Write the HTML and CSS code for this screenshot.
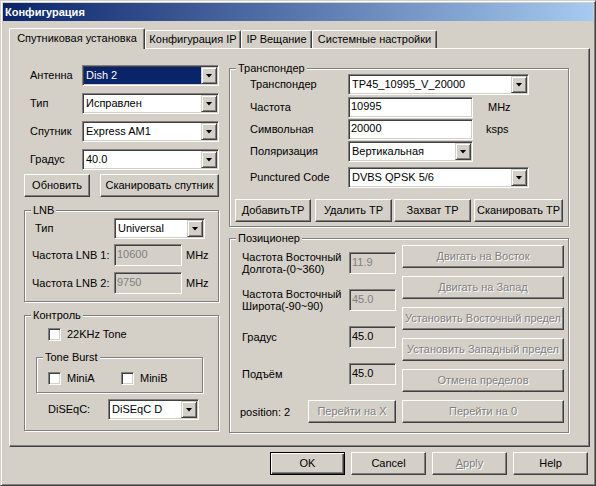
FILE: index.html
```html
<!DOCTYPE html>
<html lang="ru">
<head>
  <meta charset="UTF-8" />
  <title>Конфигурация</title>
  <link rel="stylesheet" href="styles.css">
</head>
<body>
  <div class="window">
    <div class="titlebar">Конфигурация</div>

    <div class="tabs">
      <div class="tab active tab-sat">Спутниковая установка</div>
      <div class="tab tab-ip">Конфигурация IP</div>
      <div class="tab tab-cast">IP Вещание</div>
      <div class="tab tab-sys">Системные настройки</div>
    </div>

    <div class="panel">
      <div class="col-left">
        <div class="row main-row">
          <span class="lbl">Антенна</span>
          <div class="combo main-combo"><span class="val sel">Dish 2</span><span class="drop"></span></div>
        </div>
        <div class="row main-row">
          <span class="lbl">Тип</span>
          <div class="combo main-combo"><span class="val">Исправлен</span><span class="drop"></span></div>
        </div>
        <div class="row main-row">
          <span class="lbl">Спутник</span>
          <div class="combo main-combo"><span class="val">Express AM1</span><span class="drop"></span></div>
        </div>
        <div class="row main-row">
          <span class="lbl">Градус</span>
          <div class="combo main-combo"><span class="val">40.0</span><span class="drop"></span></div>
        </div>
        <div class="row btn-row">
          <button class="btn btn-update">Обновить</button>
          <button class="btn btn-scan">Сканировать спутник</button>
        </div>

        <div class="group lnb">
          <div class="group-title">LNB</div>
          <div class="row lnb-type">
            <span class="lbl">Тип</span>
            <div class="combo lnb-combo"><span class="val">Universal</span><span class="drop"></span></div>
          </div>
          <div class="row lnb-freq">
            <span class="lbl">Частота LNB 1:</span>
            <div class="edit disabled">10600</div>
            <span class="unit">MHz</span>
          </div>
          <div class="row lnb-freq">
            <span class="lbl">Частота LNB 2:</span>
            <div class="edit disabled">9750</div>
            <span class="unit">MHz</span>
          </div>
        </div>

        <div class="group control">
          <div class="group-title">Контроль</div>
          <div class="row tone22"><span class="check"></span><span>22KHz Tone</span></div>
          <div class="group tone-burst">
            <div class="group-title">Tone Burst</div>
            <div class="row burst-row">
              <span class="burst-item"><span class="check"></span>MiniA</span>
              <span class="burst-item"><span class="check"></span>MiniB</span>
            </div>
          </div>
          <div class="row diseqc">
            <span class="lbl">DiSEqC:</span>
            <div class="combo"><span class="val">DiSEqC D</span><span class="drop"></span></div>
          </div>
        </div>
      </div>

      <div class="col-right">
        <div class="group transponder">
          <div class="group-title">Транспондер</div>
          <div class="row tp-row tp-first">
            <span class="lbl">Транспондер</span>
            <div class="combo tp-wide"><span class="val">TP45_10995_V_20000</span><span class="drop"></span></div>
          </div>
          <div class="row tp-row tp-freq">
            <span class="lbl">Частота</span>
            <div class="edit tp-narrow">10995</div>
            <span class="unit mhz">MHz</span>
          </div>
          <div class="row tp-row">
            <span class="lbl">Символьная</span>
            <div class="edit tp-narrow">20000</div>
            <span class="unit ksps">ksps</span>
          </div>
          <div class="row tp-row">
            <span class="lbl">Поляризация</span>
            <div class="combo tp-narrow"><span class="val">Вертикальная</span><span class="drop"></span></div>
          </div>
          <div class="row tp-row tp-code">
            <span class="lbl">Punctured Code</span>
            <div class="combo tp-wide"><span class="val">DVBS QPSK 5/6</span><span class="drop"></span></div>
          </div>
          <div class="row tp-buttons">
            <button class="btn tp-add">ДобавитьTP</button>
            <button class="btn tp-del">Удалить TP</button>
            <button class="btn tp-grab">Захват TP</button>
            <button class="btn tp-scan">Сканировать TP</button>
          </div>
        </div>

        <div class="group positioner">
          <div class="group-title">Позиционер</div>
          <div class="pos-body">
            <div class="pos-fields">
              <div class="row pos-row pos-two pos-first">
                <span class="lbl">Частота Восточный<br>Долгота-(0~360)</span>
                <div class="edit disabled">11.9</div>
              </div>
              <div class="row pos-row pos-two">
                <span class="lbl">Частота Восточный<br>Широта(-90~90)</span>
                <div class="edit disabled">45.0</div>
              </div>
              <div class="row pos-row">
                <span class="lbl">Градус</span>
                <div class="edit readonly">45.0</div>
              </div>
              <div class="row pos-row">
                <span class="lbl">Подъём</span>
                <div class="edit readonly">45.0</div>
              </div>
              <div class="row pos-row pos-last">
                <span class="lbl">position: 2</span>
                <button class="btn" disabled>Перейти на X</button>
              </div>
            </div>
            <div class="pos-buttons">
              <button class="btn" disabled>Двигать на Восток</button>
              <button class="btn" disabled>Двигать на Запад</button>
              <button class="btn" disabled>Установить Восточный предел</button>
              <button class="btn" disabled>Установить Западный предел</button>
              <button class="btn" disabled>Отмена пределов</button>
              <button class="btn" disabled>Перейти на 0</button>
            </div>
          </div>
        </div>
      </div>
    </div>

    <div class="dlg-buttons">
      <button class="btn default">OK</button>
      <button class="btn">Cancel</button>
      <button class="btn" disabled><u>A</u>pply</button>
      <button class="btn">Help</button>
    </div>
  </div>
</body>
</html>
```

FILE: styles.css
```css
* {
  box-sizing: border-box;
}

body {
  margin: 0;
  font: 11px/13px "Liberation Sans", Arial, sans-serif;
  color: #000;
  background: #d4d0c8;
}

/* window frame */
.window {
  width: 596px;
  height: 486px;
  padding: 2px;
  background: #d4d0c8;
  border: 1px solid;
  border-color: #d4d0c8 #404040 #404040 #d4d0c8;
  box-shadow: inset 1px 1px #fff, inset -1px -1px #808080;
}

.titlebar {
  height: 18px;
  line-height: 18px;
  padding-left: 2px;
  color: #fff;
  font-weight: bold;
  background: linear-gradient(to right, #0a246a, #a6caf0);
}

/* tabs */
.tabs {
  display: flex;
  align-items: flex-end;
  height: 20px;
  margin: 7px 0 0 6px;
}

.tab {
  height: 18px;
  padding-top: 1px;
  line-height: 15px;
  text-align: center;
  white-space: nowrap;
  border: 1px solid;
  border-bottom: 0;
  border-color: #fff #404040 #fff #fff;
  border-radius: 2px 2px 0 0;
  box-shadow: inset -1px 0 #808080;
}

.tab.active {
  position: relative;
  z-index: 1;
  height: 21px;
  margin-bottom: -1px;
  padding-top: 2px;
  background: #d4d0c8;
}

.tab-sat { width: 136px; }
.tab-ip { width: 96px; }
.tab-cast { width: 71px; }
.tab-sys { width: 125px; }

.panel {
  display: flex;
  align-items: flex-start;
  width: 581px;
  height: 399px;
  margin-left: 6px;
  padding-left: 14px;
  border: 1px solid;
  border-color: #fff #404040 #404040 #fff;
  box-shadow: inset -1px -1px #808080;
}

.col-left {
  width: 195px;
  margin-top: 16px;
}

.col-right {
  width: 340px;
  margin: 19px 0 0 10px;
}

/* controls */
.row {
  display: flex;
  align-items: center;
}

.lbl {
  white-space: nowrap;
}

.combo {
  display: flex;
  height: 21px;
  padding: 1px;
  background: #fff;
  border: 1px solid;
  border-color: #808080 #fff #fff #808080;
  box-shadow: inset 1px 1px #404040, inset -1px -1px #d4d0c8;
}

.combo .val {
  flex: 1;
  padding-left: 2px;
  line-height: 17px;
  white-space: nowrap;
  overflow: hidden;
}

.combo .val.sel {
  color: #fff;
  background: #0a246a;
}

.drop {
  display: flex;
  align-items: center;
  justify-content: center;
  width: 16px;
  height: 17px;
  background: #d4d0c8;
  border: 1px solid;
  border-color: #d4d0c8 #404040 #404040 #d4d0c8;
  box-shadow: inset 1px 1px #fff, inset -1px -1px #808080;
}

.drop::after {
  content: "";
  width: 7px;
  height: 4px;
  background: #000;
  clip-path: polygon(0 0, 100% 0, 50% 100%);
}

.edit {
  height: 22px;
  padding-left: 2px;
  line-height: 18px;
  background: #fff;
  border: 1px solid;
  border-color: #808080 #fff #fff #808080;
  box-shadow: inset 1px 1px #404040, inset -1px -1px #d4d0c8;
  white-space: nowrap;
}

.edit.disabled {
  color: #808080;
  background: #d4d0c8;
}

.edit.readonly {
  background: #d4d0c8;
}

.check {
  flex: none;
  width: 13px;
  height: 13px;
  background: #fff;
  border: 1px solid;
  border-color: #808080 #fff #fff #808080;
  box-shadow: inset 1px 1px #404040, inset -1px -1px #d4d0c8;
}

.btn {
  height: 23px;
  padding: 0;
  font: inherit;
  color: #000;
  white-space: nowrap;
  background: #d4d0c8;
  border: 1px solid;
  border-color: #fff #404040 #404040 #fff;
  box-shadow: inset -1px -1px #808080;
}

.btn:disabled {
  color: #808080;
  text-shadow: 1px 1px #fff;
}

.btn.default {
  border-color: #000;
  box-shadow: inset 1px 1px #fff, inset -1px -1px #404040, inset -2px -2px #808080;
}

/* group boxes */
.group {
  border: 1px solid #808080;
  box-shadow: inset 1px 1px #fff, 1px 1px #fff;
}

.group-title {
  width: max-content;
  margin: -7px 0 0 6px;
  padding: 0 2px;
  line-height: 13px;
  background: #d4d0c8;
}

/* left column */
.main-row {
  height: 21px;
}

.main-row + .main-row {
  margin-top: 7px;
}

.main-row .lbl {
  width: 52px;
  margin-left: 6px;
}

.main-combo {
  width: 137px;
}

.btn-row {
  justify-content: space-between;
  margin-top: 4px;
}

.btn-update { width: 66px; }
.btn-scan { width: 119px; }

.lnb {
  margin-top: 13px;
  padding-bottom: 7px;
}

.lnb-type {
  height: 21px;
  margin-top: 1px;
}

.lnb-type .lbl {
  width: 79px;
  margin-left: 10px;
}

.lnb-combo {
  width: 91px;
}

.lnb-freq {
  height: 22px;
  margin-top: 5px;
}

.lnb-freq + .lnb-freq {
  margin-top: 6px;
}

.lnb-freq .lbl {
  width: 82px;
  margin-left: 7px;
}

.lnb-freq .edit {
  width: 68px;
}

.unit {
  margin-left: 4px;
}

.control {
  margin-top: 13px;
  padding-bottom: 10px;
}

.tone22 {
  height: 13px;
  margin: 6px 0 0 23px;
}

.tone22 .check,
.burst-item .check {
  margin-right: 6px;
}

.tone-burst {
  width: 167px;
  margin: 16px 0 0 11px;
  padding-bottom: 7px;
}

.burst-row {
  height: 13px;
  margin: 8px 0 0 11px;
}

.burst-item {
  display: flex;
  align-items: center;
  width: 73px;
}

.diseqc {
  height: 21px;
  margin: 6px 0 0 23px;
}

.diseqc .lbl {
  width: 60px;
}

.diseqc .combo {
  width: 91px;
}

/* right column */
.transponder {
  padding-bottom: 4px;
}

.tp-row {
  height: 21px;
  margin-top: 1px;
}

.tp-row .lbl {
  width: 98px;
  margin-left: 20px;
}

.tp-first { margin-top: -1px; }
.tp-freq { margin-top: 2px; }
.tp-code { margin-top: 5px; }

.tp-wide { width: 181px; }
.tp-narrow { width: 125px; }

.edit.tp-narrow {
  height: 21px;
  line-height: 17px;
}

.mhz { margin-left: 15px; }
.ksps { margin-left: 13px; }

.tp-buttons {
  height: 23px;
  margin: 11px 0 0 5px;
}

.tp-add { width: 76px; }
.tp-del { width: 77px; margin-left: 4px; }
.tp-grab { width: 77px; margin-left: 2px; }
.tp-scan { width: 89px; margin-left: 3px; }

.positioner {
  margin-top: 11px;
  padding-bottom: 9px;
}

.pos-body {
  display: flex;
  margin-left: 12px;
}

.pos-fields {
  width: 154px;
}

.pos-row {
  height: 22px;
  margin-top: 15px;
}

.pos-row .lbl {
  flex: 1;
  line-height: 12px;
}

.pos-row .edit {
  width: 47px;
}

.pos-two {
  height: 23px;
  margin-top: 14px;
}

.pos-first {
  margin-top: 6px;
}

.pos-last {
  height: 23px;
}

.pos-last .lbl {
  margin-left: -2px;
}

.pos-last .btn {
  width: 88px;
}

.pos-buttons {
  display: flex;
  flex-direction: column;
  gap: 8px;
  width: 162px;
  margin-left: 6px;
}

/* dialog buttons */
.dlg-buttons {
  display: flex;
  justify-content: flex-end;
  gap: 6px;
  margin-top: 5px;
  padding-right: 5px;
}

.dlg-buttons .btn {
  width: 75px;
}
```
